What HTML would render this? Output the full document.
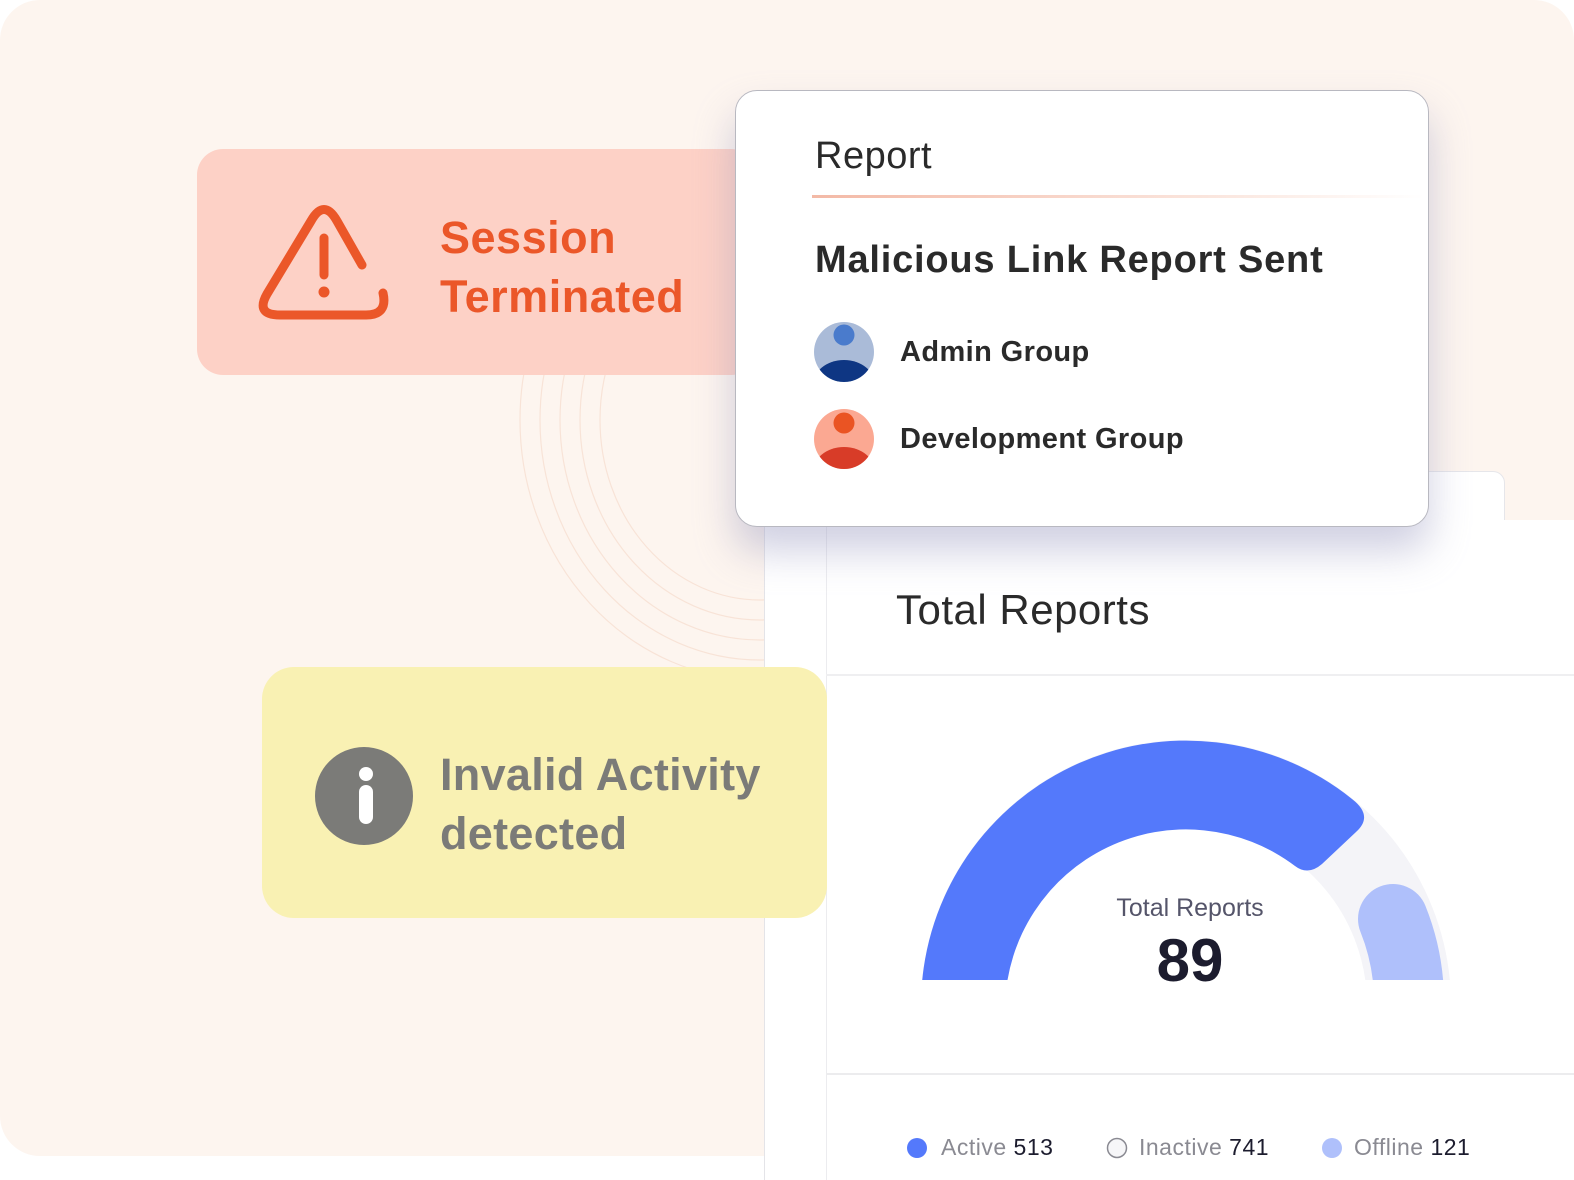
<!DOCTYPE html>
<html><head><meta charset="utf-8"><style>
*{margin:0;padding:0;box-sizing:border-box}
body{width:1574px;height:1160px;background:#fff;position:relative;overflow:hidden;font-family:"Liberation Sans",sans-serif}
.bg{position:absolute;left:0;top:0;width:1574px;height:1156px;background:#fdf5ef;border-radius:40px}
.abs{position:absolute}
</style></head><body>
<div class="bg"></div>
<svg class="abs" style="left:0;top:0" width="1574" height="1160">
<g fill="none" stroke="#f6dccd" stroke-width="1.2" opacity="0.7">
<ellipse cx="760" cy="420" rx="240" ry="260"/><ellipse cx="760" cy="420" rx="220" ry="240"/><ellipse cx="760" cy="420" rx="200" ry="220"/><ellipse cx="760" cy="420" rx="180" ry="200"/><ellipse cx="760" cy="420" rx="160" ry="180"/>
</g></svg>
<div class="abs" style="left:1100px;top:471px;width:405px;height:80px;background:#fff;border:1px solid #e6e6ea;border-radius:12px"></div>
<div class="abs" style="left:764px;top:520px;width:820px;height:660px;background:#fff;border-left:1px solid #e4e4e8"></div>
<div class="abs" style="left:826px;top:520px;width:760px;height:660px;background:#fff;border-left:1px solid #ececef"></div>
<div class="abs" style="left:826px;top:674px;width:760px;height:2px;background:#efeff1"></div>
<div class="abs" style="left:826px;top:1073px;width:760px;height:2px;background:#ececee"></div>
<div class="abs" style="left:896px;top:586px;font-size:42px;letter-spacing:0.5px;color:#2a2a2a">Total Reports</div>
<svg class="abs" style="left:0;top:0" width="1574" height="1160">
<defs><clipPath id="g"><rect x="900" y="700" width="600" height="280"/></clipPath></defs>
<g clip-path="url(#g)">
<circle cx="1186" cy="1005" r="223" fill="none" stroke="#f4f4f8" stroke-width="84"/>
<path d="M921 1005 A265 265 0 0 1 1352 799 Q1374 816 1356 832 L1322 864 Q1308 876 1295 866 A181 181 0 0 0 1005 1005 Z" fill="#5479fb"/>
<path d="M1393 919 A223 223 0 0 1 1409 1005" fill="none" stroke="#afc0fb" stroke-width="70" stroke-linecap="round"/>
</g>
<circle cx="917" cy="1148" r="10" fill="#5479fb"/>
<circle cx="1117" cy="1148" r="9.5" fill="#f6f6f8" stroke="#8a8a92" stroke-width="1.5"/>
<circle cx="1332" cy="1148" r="10" fill="#afc0fb"/>
</svg>
<div class="abs" style="left:1090px;top:894px;width:200px;text-align:center;font-size:25px;color:#55556a">Total Reports</div>
<div class="abs" style="left:1090px;top:926px;width:200px;text-align:center;font-size:60px;font-weight:bold;color:#1c1c2e">89</div>
<div class="abs" style="left:941px;top:1134px;font-size:23px;letter-spacing:0.5px;color:#8a8a92;white-space:nowrap">Active <span style="color:#1c1c2e">513</span></div>
<div class="abs" style="left:1139px;top:1134px;font-size:23px;letter-spacing:0.5px;color:#8a8a92;white-space:nowrap">Inactive <span style="color:#1c1c2e">741</span></div>
<div class="abs" style="left:1354px;top:1134px;font-size:23px;letter-spacing:0.5px;color:#8a8a92;white-space:nowrap">Offline <span style="color:#1c1c2e">121</span></div>
<div class="abs" style="left:197px;top:149px;width:560px;height:226px;background:#fdd1c6;border-radius:26px"></div>
<svg class="abs" style="left:0;top:0" width="760" height="400">
<path d="M362 265 L337 221 Q324 198 311 221 L267 294 Q255 315 280 315 L366 315 Q388 315 383 293" fill="none" stroke="#eb5729" stroke-width="9" stroke-linecap="round" stroke-linejoin="round"/>
<line x1="324" y1="238" x2="324" y2="275" stroke="#eb5729" stroke-width="9" stroke-linecap="round"/>
<circle cx="324" cy="292" r="5.5" fill="#eb5729"/>
</svg>
<div class="abs" style="left:440px;top:208px;font-size:45px;line-height:59px;font-weight:bold;color:#eb5729;letter-spacing:0.5px">Session<br>Terminated</div>
<div class="abs" style="left:735px;top:90px;width:694px;height:437px;background:#fff;border:1px solid #b8b8c0;border-radius:22px;box-shadow:0 24px 40px rgba(150,150,190,0.45)">
<div class="abs" style="left:79px;top:44px;font-size:38px;letter-spacing:0.5px;color:#2a2a2a">Report</div>
<div class="abs" style="left:76px;top:104px;width:612px;height:3px;background:linear-gradient(90deg,#f3b9a6,#fbe9e2 70%,#fff)"></div>
<div class="abs" style="left:79px;top:148px;font-size:38px;font-weight:bold;color:#2a2a2a;letter-spacing:0.8px">Malicious Link Report Sent</div>
<svg class="abs" style="left:76px;top:230px" width="64" height="152">
<defs><clipPath id="c1"><circle cx="32" cy="31" r="30"/></clipPath><clipPath id="c2"><circle cx="32" cy="118" r="30"/></clipPath></defs>
<circle cx="32" cy="31" r="30" fill="#aabbd8"/>
<g clip-path="url(#c1)"><circle cx="32" cy="14" r="10.5" fill="#4a7bcc"/><ellipse cx="32" cy="66" rx="32" ry="27" fill="#0e3683"/></g>
<circle cx="32" cy="118" r="30" fill="#fba892"/>
<g clip-path="url(#c2)"><circle cx="32" cy="102" r="10.5" fill="#ea5423"/><ellipse cx="32" cy="153" rx="32" ry="27" fill="#d83c28"/></g>
</svg>
<div class="abs" style="left:164px;top:245px;font-size:29px;font-weight:bold;letter-spacing:0.4px;color:#2a2a2a">Admin Group</div>
<div class="abs" style="left:164px;top:332px;font-size:29px;font-weight:bold;letter-spacing:0.4px;color:#2a2a2a">Development Group</div>
</div>
<div class="abs" style="left:262px;top:667px;width:565px;height:251px;background:#f9f1b3;border-radius:32px"></div>
<div class="abs" style="left:315px;top:747px;width:98px;height:98px;border-radius:50%;background:#7b7b78"></div>
<div class="abs" style="left:359px;top:767px;width:14px;height:14px;border-radius:50%;background:#fff"></div>
<div class="abs" style="left:359px;top:785px;width:14px;height:39px;border-radius:7px;background:#fff"></div>
<div class="abs" style="left:440px;top:745px;font-size:45px;line-height:59px;font-weight:bold;color:#7b7b78;letter-spacing:0.3px">Invalid Activity<br>detected</div>
</body></html>
